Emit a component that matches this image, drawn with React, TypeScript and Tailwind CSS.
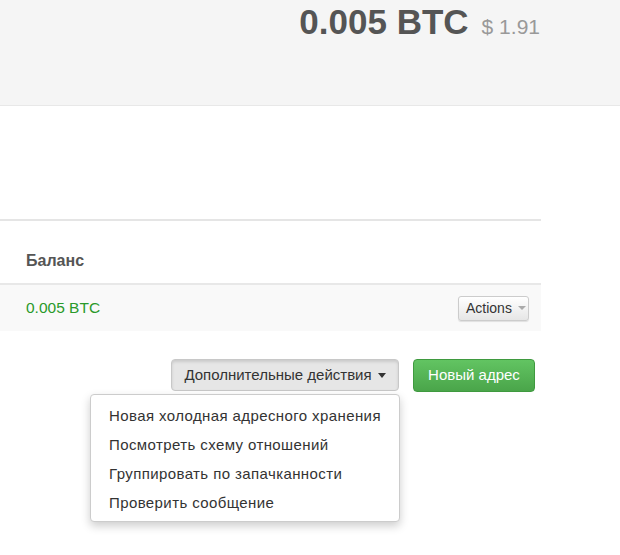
import React from 'react';

const font = { fontFamily: '"Liberation Sans", Arial, sans-serif' };

const menuItems = [
  'Новая холодная адресного хранения',
  'Посмотреть схему отношений',
  'Группировать по запачканности',
  'Проверить сообщение',
];

const App: React.FC = () => {
  return (
    <div className="w-[620px] h-[555px] bg-white overflow-hidden" style={font}>
      {/* Balance header */}
      <div className="h-[106px] bg-[#f5f5f5] border-b border-[#e8e8e8] flex justify-end items-baseline pr-[80px] pt-[1px]">
        <span className="text-[35px] font-bold text-[#555] leading-[42px]">0.005 BTC</span>
        <span className="ml-[13px] text-[21px] text-[#999]">$ 1.91</span>
      </div>

      <div className="w-[541px]">
        <div className="h-[113px]" />
        {/* Table */}
        <div className="border-t-2 border-[#e5e5e5]">
          <div className="h-[64px] flex items-end pb-[10px] pl-[26px] border-b-2 border-[#e8e8e8]">
            <span className="text-[16px] font-bold text-[#555]">Баланс</span>
          </div>
          <div className="h-[46px] bg-[#f9f9f9] flex items-center justify-between pl-[26px] pr-[12px]">
            <span className="text-[15.5px] text-[#2a9a2a]">0.005 BTC</span>
            <button className="h-[25px] w-[71px] pl-[7px] flex items-center gap-[6px] rounded-[3px] border border-[#ccc] bg-gradient-to-b from-white to-[#e6e6e6] shadow-[0_1px_1px_rgba(0,0,0,0.1)] text-[14px] text-[#333]">
              Actions
              <span className="w-0 h-0 border-l-[4px] border-r-[4px] border-t-[4px] border-l-transparent border-r-transparent border-t-[#aaa]" />
            </button>
          </div>
        </div>

        {/* Actions row */}
        <div className="mt-[28px] flex justify-end pr-[6px] gap-[14px]">
          <div className="relative">
            <button className="h-[32px] w-[228px] flex items-center justify-center gap-[6px] rounded-[4px] border border-[#c8c8c8] bg-[#e6e6e6] shadow-[inset_0_2px_3px_rgba(0,0,0,0.12)] text-[15px] text-[#333]">
              Дополнительные действия
              <span className="w-0 h-0 border-l-[4px] border-r-[4px] border-t-[5px] border-l-transparent border-r-transparent border-t-[#333]" />
            </button>
            <div className="absolute right-[-1px] top-[35px] w-[310px] bg-white border border-[#ccc] rounded-[4px] shadow-[0_4px_10px_rgba(0,0,0,0.2)] pt-[7px] pb-[3px]">
              {menuItems.map((item) => (
                <div key={item} className="h-[29px] flex items-center pl-[18px] text-[15px] tracking-[0.4px] text-[#333] whitespace-nowrap">
                  {item}
                </div>
              ))}
            </div>
          </div>
          <button className="h-[33px] w-[122px] rounded-[4px] border border-[#3f9a3f] bg-gradient-to-b from-[#62c462] to-[#4aa54a] text-[15px] text-white">
            Новый адрес
          </button>
        </div>
      </div>
    </div>
  );
};

export default App;
